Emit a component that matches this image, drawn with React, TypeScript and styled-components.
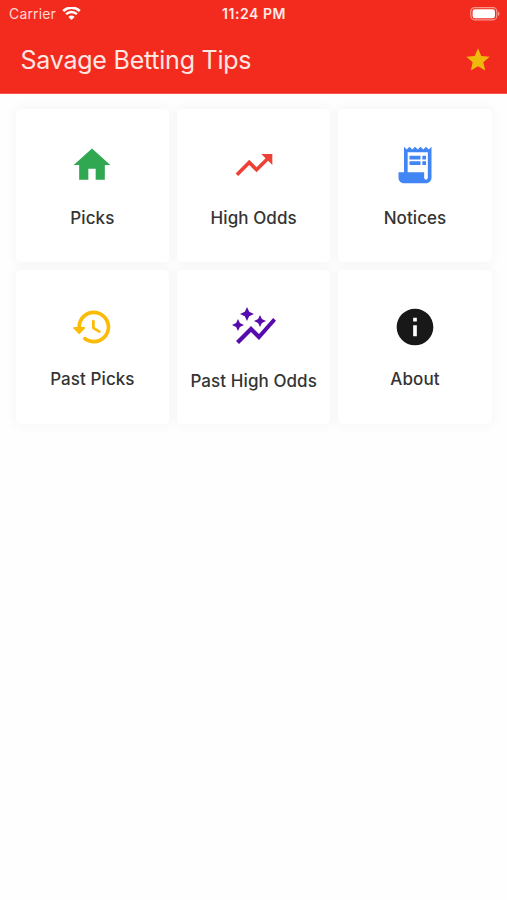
import React from "react";
import styled, { createGlobalStyle } from "styled-components";
import {
  MdAutoGraph,
  MdHome,
  MdInfo,
  MdReceiptLong,
  MdStar,
  MdTrendingUp,
} from "react-icons/md";

const GlobalStyle = createGlobalStyle`
  * { box-sizing: border-box; }
  body {
    margin: 0;
    background: #fefefe;
    font-family: Inter, "Liberation Sans", sans-serif;
  }
`;

const Screen = styled.div`
  min-height: 900px;
  background: #fefefe;
`;

const Header = styled.header`
  height: 94px;
  background: #f32b1e;
  color: #fff;
  border-bottom: 1px solid #f4564a;
`;

const StatusBar = styled.div`
  height: 27px;
  display: grid;
  grid-template-columns: 1fr auto 1fr;
  align-items: center;
  padding: 0 7px 0 9px;
`;

const Carrier = styled.div`
  display: flex;
  align-items: center;
  gap: 6px;
  font-size: 14px;
  letter-spacing: 0.15px;
  color: #ffd9d5;
`;

const Clock = styled.div`
  margin-right: 1px;
  font-size: 14px;
  font-weight: 600;
  letter-spacing: 0.55px;
  color: #ffe9e6;
`;

const Battery = styled.svg`
  justify-self: end;
`;

const TitleBar = styled.div`
  height: 66px;
  display: flex;
  align-items: center;
  justify-content: space-between;
  padding: 0 15.5px 0 20.5px;
`;

const Title = styled.h1`
  margin: 0;
  font-size: 25px;
  font-weight: 400;
  letter-spacing: -0.23px;
  color: #ffe7e4;
`;

const Grid = styled.main`
  display: grid;
  grid-template-columns: repeat(3, 153.3px);
  grid-auto-rows: 153.5px;
  gap: 8px;
  justify-content: center;
  padding: 14.8px 0 0 0.4px;
`;

const Shade = styled.div`
  display: grid;
  border-radius: 5px;
  box-shadow: 0 0 8px 4px rgba(0, 0, 0, 0.023);
`;

const Card = styled.button`
  position: relative;
  z-index: 1;
  display: flex;
  flex-direction: column;
  align-items: center;
  justify-content: center;
  gap: 20.5px;
  padding: 0;
  border: 0;
  border-radius: 5px;
  background: #fff;
  font-family: inherit;
`;

const Label = styled.span`
  font-size: 17px;
  font-weight: 500;
  line-height: 20px;
  letter-spacing: 0.08px;
  white-space: nowrap;
  color: #343434;
`;

type IconProps = { size: number; color: string };

function HistoryIcon({ size, color }: IconProps) {
  return (
    <svg width={size} height={size} viewBox="0 0 24 24" fill={color}>
      <path d="M13.26 3C8.17 2.86 4 6.95 4 12H2.21c-.45 0-.67.54-.35.85l2.79 2.8c.2.2.51.2.71 0l2.79-2.8c.31-.31.09-.85-.36-.85H6c0-3.9 3.18-7.05 7.1-7 3.72.05 6.85 3.18 6.9 6.9.05 3.91-3.1 7.1-7 7.1-1.61 0-3.1-.55-4.28-1.48-.4-.31-.96-.28-1.32.08-.42.42-.39 1.13.08 1.49C9 20.29 10.91 21 13 21c5.05 0 9.14-4.17 9-9.26-.13-4.69-4.05-8.61-8.74-8.74zm-.51 5c-.41 0-.75.34-.75.75v3.68c0 .35.19.68.49.86l3.12 1.85c.36.21.82.09 1.03-.26.21-.36.09-.82-.26-1.03l-2.88-1.71v-3.4c0-.4-.34-.74-.75-.74z" />
    </svg>
  );
}

type Item = { label: string; icon: React.ComponentType<IconProps>; color: string; size: number };

const items: Item[] = [
  { label: "Picks", icon: MdHome, color: "#30a852", size: 44 },
  { label: "High Odds", icon: MdTrendingUp, color: "#ee4135", size: 44 },
  { label: "Notices", icon: MdReceiptLong, color: "#4285f4", size: 44 },
  { label: "Past Picks", icon: HistoryIcon, color: "#fbbc08", size: 44 },
  { label: "Past High Odds", icon: MdAutoGraph, color: "#560bad", size: 48 },
  { label: "About", icon: MdInfo, color: "#181818", size: 44 },
];

export default function App() {
  return (
    <Screen>
      <GlobalStyle />
      <Header>
        <StatusBar>
          <Carrier>
            Carrier
            <svg width="19" height="14" viewBox="0 0 19 14" fill="none">
              <path d="M1.2 4.0a12 12 0 0 1 16.6 0" stroke="#fff" strokeWidth="2.6" />
              <path d="M4.1 7.2a7.8 7.8 0 0 1 10.8 0" stroke="#fff" strokeWidth="2.4" />
              <path d="M6.4 9.9a4.6 4.6 0 0 1 6.2 0L9.5 13z" fill="#fff" />
            </svg>
          </Carrier>
          <Clock>11:24 PM</Clock>
          <Battery width="30" height="14" viewBox="0 0 30 14" fill="none">
            <rect x="0.8" y="0.6" width="26" height="12.2" rx="3.8" stroke="#f9978f" strokeWidth="1.2" />
            <rect x="2.6" y="2.2" width="22.4" height="9" rx="2.2" fill="#fff" />
            <path d="M28 4.5c2 .7 2 3.7 0 4.4z" fill="#f9978f" />
          </Battery>
        </StatusBar>
        <TitleBar>
          <Title>Savage Betting Tips</Title>
          <MdStar size={28} color="#efb90c" />
        </TitleBar>
      </Header>
      <Grid>
        {items.map(({ label, icon: Icon, color, size }) => (
          <Shade key={label}>
            <Card>
              <Icon size={size} color={color} />
              <Label>{label}</Label>
            </Card>
          </Shade>
        ))}
      </Grid>
    </Screen>
  );
}
